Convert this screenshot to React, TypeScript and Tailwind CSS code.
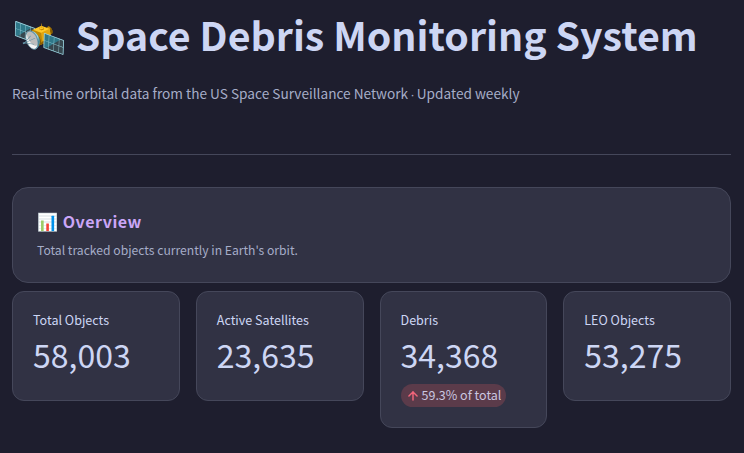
import { ArrowUp } from 'lucide-react';

const font = "font-['Noto_Sans_CJK_JP','Noto_Color_Emoji',sans-serif]";

interface MetricProps {
  label: string;
  value: string;
  delta?: string;
}

function Metric({ label, value, delta }: MetricProps) {
  return (
    <div className="rounded-xl border border-[#45475a] bg-[#313244] px-5 pt-[17px] pb-[20px]">
      <div className="text-[12.55px] leading-[22px] text-[#cdd6f4]">{label}</div>
      <div className="mb-[3px] text-[32px] leading-[46px] text-[#cdd6f4]">{value}</div>
      {delta && (
        <div className="mt-[4px] inline-flex h-[23px] items-center gap-[2px] rounded-full bg-[#5b3b4a] pr-[5px] pl-[5px] align-top text-[12.5px] text-[#c9c6e0]">
          <ArrowUp strokeWidth={2.5} className="h-[14px] w-[14px] text-[#f2657a]" />
          {delta}
        </div>
      )}
    </div>
  );
}

export default function App() {
  return (
    <div className={`min-h-[453px] overflow-hidden bg-[#1e1e2e] pr-[13px] pl-3 ${font}`}>
      <h1 className="flex items-center gap-[9px] pt-[7px] text-[39.3px] leading-[54px] font-bold whitespace-nowrap text-[#cdd6f4]">
        <span className="text-[44px]">🛰️</span>
        <span>Space Debris Monitoring System</span>
      </h1>
      <p className="mt-[20px] text-[13.65px] leading-[24px] text-[#a6adc8]">
        Real-time orbital data from the US Space Surveillance Network <span className="mx-[-1px] font-['Liberation_Sans',sans-serif]">·</span> Updated weekly
      </p>
      <hr className="mt-[47px] border-t border-[#45475a]" />
      <div className="mt-[32px] rounded-2xl border border-[#45475a] bg-[#313244] px-6 pt-[19px] pb-[21px]">
        <div className="text-[16px] leading-[28px] font-bold tracking-[0.5px] text-[#cba6f7]">
          <span className="text-[17px]">📊</span> Overview
        </div>
        <div className="mt-[5px] text-[12.16px] leading-[21px] text-[#a6adc8]">Total tracked objects currently in Earth's orbit.</div>
      </div>
      <div className="mt-2 grid grid-cols-4 items-start gap-4">
        <Metric label="Total Objects" value="58,003" />
        <Metric label="Active Satellites" value="23,635" />
        <Metric label="Debris" value="34,368" delta="59.3% of total" />
        <Metric label="LEO Objects" value="53,275" />
      </div>
    </div>
  );
}
